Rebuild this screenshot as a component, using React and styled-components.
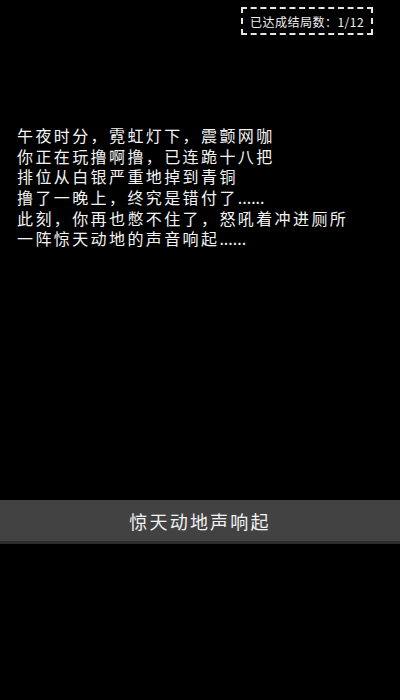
import React from 'react';
import styled, { createGlobalStyle } from 'styled-components';

const GlobalStyle = createGlobalStyle`
    html, body {
        margin: 0;
        padding: 0;
        background: #000;
    }
    body {
        font-family: "Noto Sans CJK SC", "Noto Sans", sans-serif;
    }
`;

const Screen = styled.div`
    width: 400px;
    height: 700px;
    background: #000;
    display: flex;
    flex-direction: column;
    overflow: hidden;
`;

const TopBar = styled.div`
    display: flex;
    justify-content: flex-end;
    padding: 7px 27px 0 0;
`;

const EndingBadge = styled.div`
    width: 128px;
    height: 24px;
    border: 2px dashed #e6e6e6;
    color: #f0f0f0;
    font-size: 12px;
    display: flex;
    align-items: center;
    justify-content: center;
    letter-spacing: 0.5px;
`;

const Story = styled.div`
    padding: 0 0 0 17px;
    margin-top: 90px;
    color: #f4f4f4;
    font-size: 16px;
    line-height: 20.7px;
    letter-spacing: 2.4px;
`;

const Line = styled.div`
    white-space: nowrap;
    height: 20.7px;
`;

const Dots = styled.span`
    letter-spacing: 0;
`;

const Spacer = styled.div`
    flex: 1;
    max-height: 251px;
`;

const ChoiceButton = styled.button`
    width: 100%;
    height: 44px;
    border: none;
    border-bottom: 3px solid #2c2c2c;
    background: #424242;
    color: #f2f2f2;
    font-family: "Noto Sans CJK SC", "Noto Sans", sans-serif;
    font-size: 18px;
    letter-spacing: 2.2px;
    display: flex;
    align-items: center;
    justify-content: center;
    padding: 0;
    cursor: pointer;
`;

const lines = [
    ['午夜时分，霓虹灯下，震颤网咖'],
    ['你正在玩撸啊撸，已连跪十八把'],
    ['排位从白银严重地掉到青铜'],
    ['撸了一晚上，终究是错付了', '......'],
    ['此刻，你再也憋不住了，怒吼着冲进厕所'],
    ['一阵惊天动地的声音响起', '......'],
];

export default function App() {
    return (
        <>
            <GlobalStyle />
            <Screen>
                <TopBar>
                    <EndingBadge>已达成结局数：1/12</EndingBadge>
                </TopBar>
                <Story>
                    {lines.map(([text, dots], i) => (
                        <Line key={i}>
                            {text}
                            {dots && <Dots>{dots}</Dots>}
                        </Line>
                    ))}
                </Story>
                <Spacer />
                <ChoiceButton>惊天动地声响起</ChoiceButton>
            </Screen>
        </>
    );
}
